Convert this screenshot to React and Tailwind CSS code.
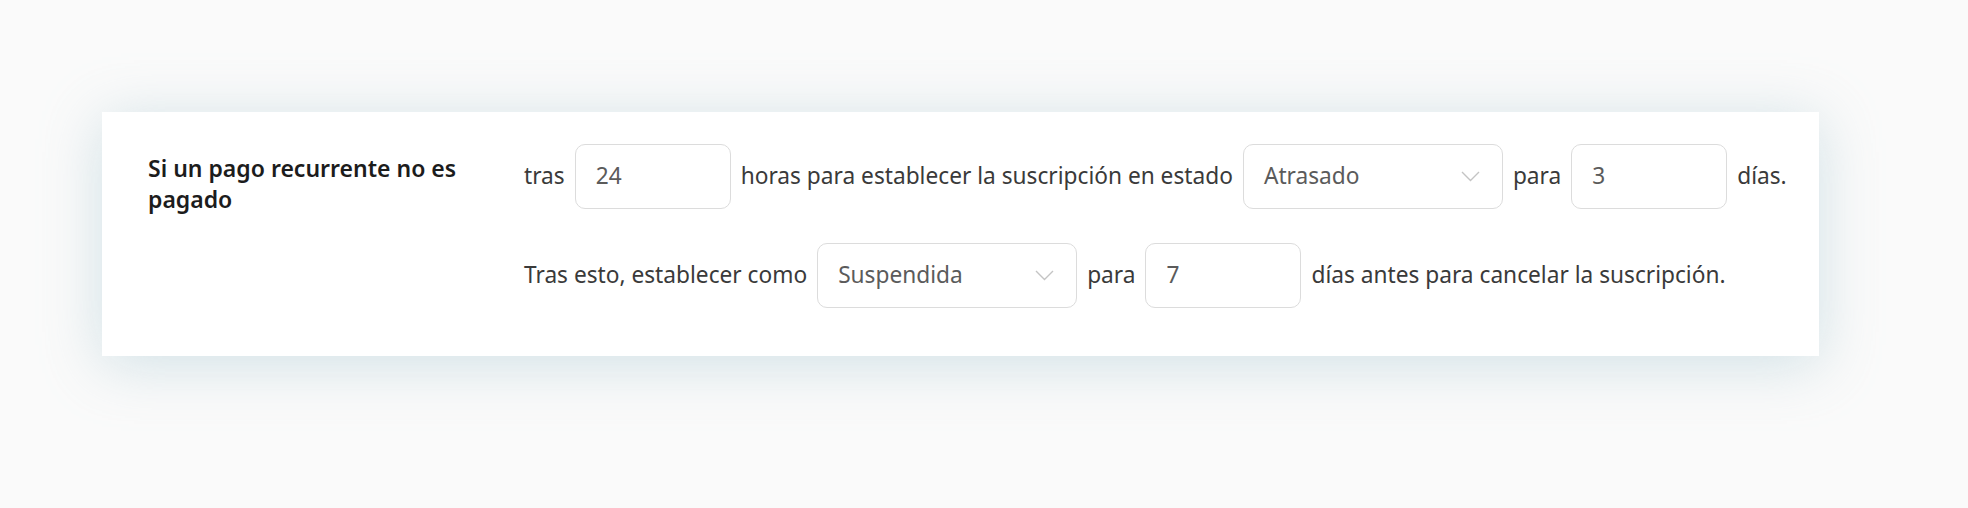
import React from "react";

const font = { fontFamily: '"Noto Sans", "Open Sans", sans-serif' };

function Box({ value, wide }) {
  return (
    <div
      className={
        "h-[65px] shrink-0 rounded-[10px] border border-[#dcdcdc] bg-white pl-[20px] pr-[22px] flex items-center justify-between text-[#5b5b5b] " +
        (wide ? "w-[260px]" : "w-[156px]")
      }
    >
      <span>{value}</span>
      {wide && (
        <svg width="19" height="11" viewBox="0 0 19 11" fill="none">
          <polyline points="1,1 9.5,9.5 18,1" stroke="#c4c4c4" strokeWidth="1.4" />
        </svg>
      )}
    </div>
  );
}

export default function App() {
  return (
    <div className="min-h-[508px] bg-[#fafafa] pt-[112px]" style={font}>
      <div className="ml-[102px] w-[1717px] bg-white flex pt-[32px] pb-[48px] pl-[46px] shadow-[0_8px_55px_rgba(160,196,206,0.45)]">
        <div className="w-[376px] shrink-0 pr-[30px] pt-[9px] text-[23px] leading-[31px] font-semibold text-[#1c1c1c]">
          Si un pago recurrente no es pagado
        </div>
        <div className="flex flex-col gap-[34px] text-[22.7px] text-[#3a3a3a]">
          <div className="flex items-center gap-[10px] whitespace-nowrap">
            <span>tras</span>
            <Box value="24" />
            <span>horas para establecer la suscripción en estado</span>
            <Box value="Atrasado" wide />
            <span>para</span>
            <Box value="3" />
            <span>días.</span>
          </div>
          <div className="flex items-center gap-[10px] whitespace-nowrap">
            <span>Tras esto, establecer como</span>
            <Box value="Suspendida" wide />
            <span>para</span>
            <Box value="7" />
            <span>días antes para cancelar la suscripción.</span>
          </div>
        </div>
      </div>
    </div>
  );
}
